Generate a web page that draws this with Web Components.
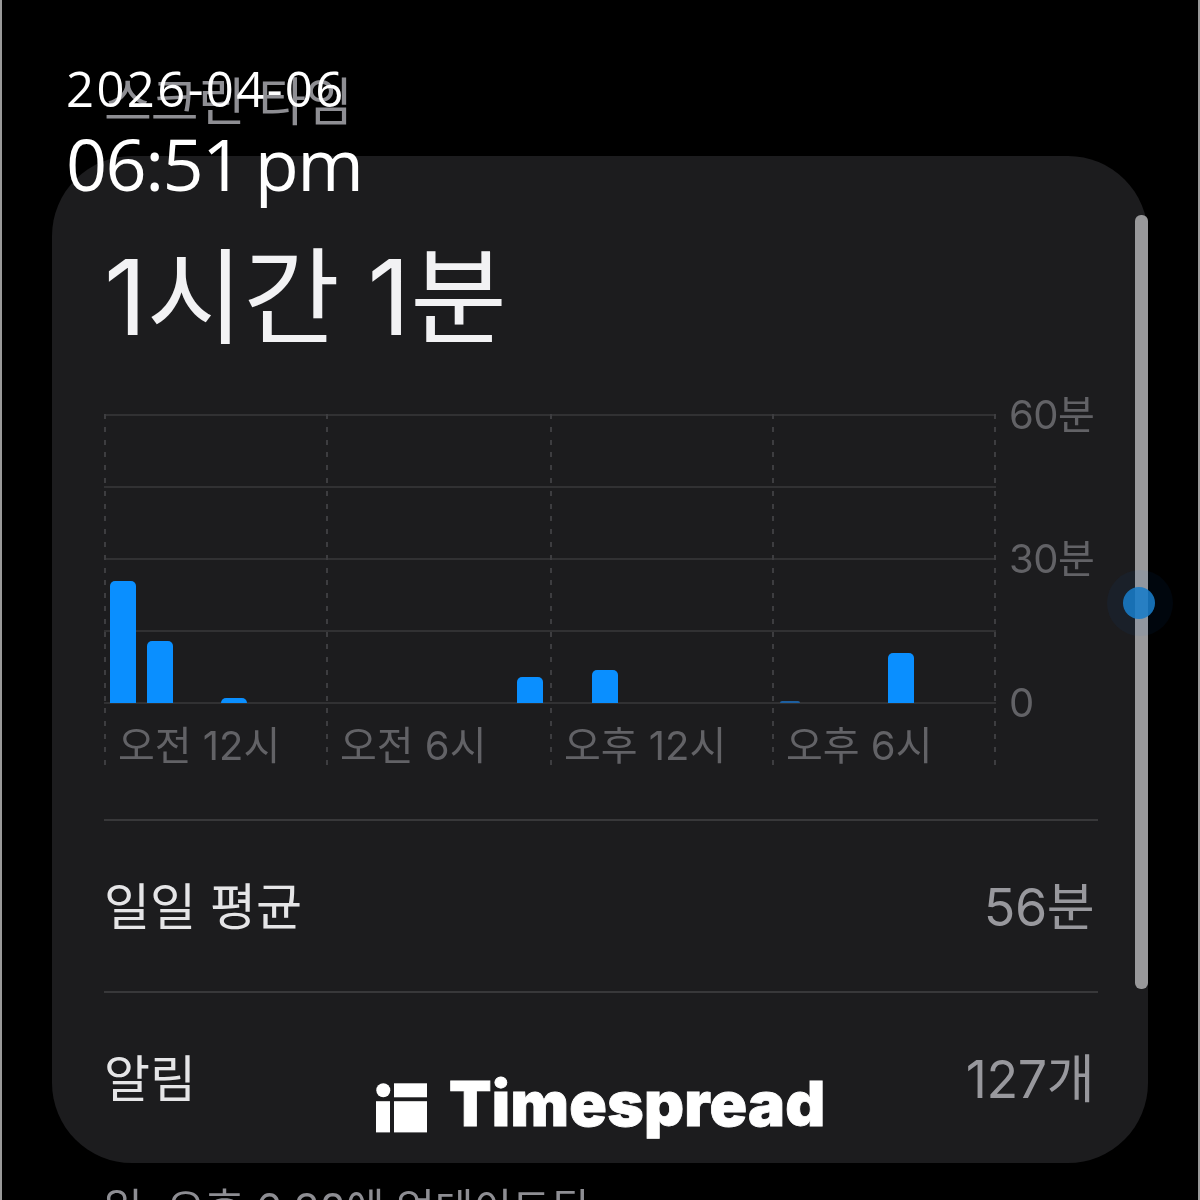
<!DOCTYPE html>
<html lang="ko">
<head>
<meta charset="utf-8">
<title>스크린 타임</title>
<style>
  html, body { margin: 0; padding: 0; background: #000; }
</style>
</head>
<body>
<screen-time-page>
  <stat-row slot="rows" label="일일 평균" value="56분"></stat-row>
  <stat-row slot="rows" label="알림" value="127개" last></stat-row>
</screen-time-page>

<script>
const KR_FONT = 'Inter, "Noto Sans CJK KR", "Noto Sans", sans-serif';

class ScreenTimePage extends HTMLElement {
  connectedCallback() {
    this.attachShadow({ mode: 'open' });
    this.shadowRoot.innerHTML = `
      <style>
        :host {
          display: block;
          position: relative;
          width: 1200px;
          height: 1200px;
          box-sizing: border-box;
          overflow: hidden;
          background: #000;
          border-left: 2px solid #9a9a9a;
          border-right: 2px solid #9a9a9a;
          font-family: ${KR_FONT};
        }
        .content {
          display: flex;
          flex-direction: column;
          padding: 0 50px;
          filter: blur(0.5px);
        }
        h1 {
          margin: 0;
          padding: 68px 0 0 52px;
          height: 156px;
          box-sizing: border-box;
          font-size: 52px;
          line-height: 70px;
          font-weight: 400;
          color: #8e8e93;
          letter-spacing: -1px;
        }
        .card {
          box-sizing: border-box;
          height: 1007px;
          background: #1c1c1e;
          border-radius: 80px;
          padding: 66px 52px 0 52px;
          overflow: hidden;
        }
        .total {
          font-size: 105px;
          line-height: 150px;
          color: #f2f2f4;
          font-weight: 400;
          word-spacing: -2px;
          margin-bottom: 42px;
        }
        .note {
          padding: 21px 0 0 52px;
          font-size: 42px;
          line-height: 50px;
          color: #8e8e93;
          white-space: nowrap;
        }
      </style>
      <div class="content">
        <h1>스크린 타임</h1>
        <div class="card">
          <div class="total">1시간 1분</div>
          <usage-chart></usage-chart>
          <slot name="rows"></slot>
        </div>
        <div class="note">일, 오후 6:38에 업데이트됨</div>
      </div>
      <scroll-indicator></scroll-indicator>
      <time-stamp></time-stamp>
      <brand-logo></brand-logo>
    `;
  }
}

class UsageChart extends HTMLElement {
  connectedCallback() {
    this.attachShadow({ mode: 'open' });

    // hour of the day -> bar height in px
    const usage = { 0: 122, 1: 62, 3: 5, 11: 26, 13: 33, 18: 2, 21: 50 };
    let bars = '';
    for (let hour = 0; hour < 24; hour++) {
      const h = usage[hour];
      bars += h
        ? `<div class="bar${h < 3 ? ' sliver' : ''}" style="height:${h}px"></div>`
        : '<div></div>';
    }

    this.shadowRoot.innerHTML = `
      <style>
        :host {
          display: block;
          position: relative;
          width: 996px;
          height: 351px;
          margin-bottom: 54px;
          font-family: ${KR_FONT};
        }
        .lines {
          width: 892px;
          display: flex;
          flex-direction: column;
        }
        .lines div {
          box-sizing: border-box;
          height: 72px;
          border-top: 2px solid #313133;
        }
        .lines div:last-child { height: 2px; }
        .dashes {
          position: absolute;
          left: 0;
          top: 0;
          width: 892px;
          height: 351px;
          display: grid;
          grid-template-columns: 222px 224px 222px 222px 2px;
        }
        .dashes i {
          background: repeating-linear-gradient(to bottom, #3d3d40 0 5px, transparent 5px 12.8px) left top / 2px 100% no-repeat;
        }
        .bars {
          position: absolute;
          left: 0;
          top: 0;
          width: 890px;
          height: 289px;
          display: grid;
          grid-template-columns: repeat(24, 1fr);
          align-items: end;
        }
        .bar {
          width: 26px;
          justify-self: center;
          background: #0a8fff;
          border-radius: 5px 5px 0 0;
        }
        .bar.sliver { width: 20px; background: #1d5fa0; }
        .hours {
          position: absolute;
          left: 0;
          top: 288px;
          width: 892px;
          height: 63px;
          display: grid;
          grid-template-columns: 222px 224px 222px 222px;
          align-items: center;
          font-size: 40px;
          line-height: 63px;
          color: #626266;
        }
        .hours span { padding: 12px 0 0 14px; white-space: nowrap; }
        .axis {
          position: absolute;
          left: 905px;
          top: -19px;
          height: 328px;
          display: flex;
          flex-direction: column;
          justify-content: space-between;
          font-size: 40px;
          line-height: 40px;
          letter-spacing: -0.5px;
          color: #626266;
        }
      </style>
      <div class="lines"><div></div><div></div><div></div><div></div><div></div></div>
      <div class="bars">${bars}</div>
      <div class="dashes"><i></i><i></i><i></i><i></i><i></i></div>
      <div class="hours">
        <span>오전 12시</span><span>오전 6시</span><span>오후 12시</span><span>오후 6시</span>
      </div>
      <div class="axis"><span>60분</span><span>30분</span><span>0</span></div>
    `;
  }
}

class StatRow extends HTMLElement {
  connectedCallback() {
    this.attachShadow({ mode: 'open' });
    this.shadowRoot.innerHTML = `
      <style>
        :host {
          display: flex;
          box-sizing: border-box;
          width: 994px;
          height: 172px;
          align-items: center;
          justify-content: space-between;
          padding: 0 4px 6px 0;
          border-top: 2px solid #38383a;
          font-family: ${KR_FONT};
          font-size: 50px;
        }
        .label { color: #e5e5e7; }
        .value { color: #98989d; font-size: 52px; letter-spacing: -0.5px; }
      </style>
      <span class="label">${this.getAttribute('label')}</span>
      <span class="value">${this.getAttribute('value')}</span>
    `;
  }
}

class ScrollIndicator extends HTMLElement {
  connectedCallback() {
    this.attachShadow({ mode: 'open' });
    this.shadowRoot.innerHTML = `
      <style>
        :host {
          position: absolute;
          left: 1133px;
          top: 215px;
          width: 13px;
          height: 774px;
          background: #98989a;
          border-radius: 6px;
          filter: blur(0.5px);
        }
        .halo {
          position: absolute;
          left: -28px;
          top: 355px;
          width: 66px;
          height: 66px;
          border-radius: 50%;
          background: rgba(0, 122, 255, 0.05);
        }
        .dot {
          position: absolute;
          left: -12px;
          top: 372px;
          width: 32px;
          height: 32px;
          border-radius: 50%;
          background: rgba(24, 124, 200, 0.88);
        }
      </style>
      <div class="halo"></div>
      <div class="dot"></div>
    `;
  }
}

class TimeStamp extends HTMLElement {
  connectedCallback() {
    this.attachShadow({ mode: 'open' });
    this.shadowRoot.innerHTML = `
      <style>
        :host {
          position: absolute;
          left: 64px;
          top: 55px;
          display: flex;
          flex-direction: column;
          color: #fff;
          font-family: "Open Sans", "Noto Sans", sans-serif;
          white-space: nowrap;
        }
        .date { font-size: 49px; line-height: 66px; letter-spacing: 2.4px; }
        .time { font-size: 72px; line-height: 85px; letter-spacing: -1.6px; word-spacing: -4px; }
      </style>
      <div class="date">2026-04-06</div>
      <div class="time">06:51 pm</div>
    `;
  }
}

class BrandLogo extends HTMLElement {
  connectedCallback() {
    this.attachShadow({ mode: 'open' });
    this.shadowRoot.innerHTML = `
      <style>
        :host {
          position: absolute;
          left: 374px;
          top: 1069px;
          display: flex;
          align-items: center;
          gap: 22px;
          color: #fff;
          font-family: Inter, "Liberation Sans", sans-serif;
          font-weight: 900;
          font-size: 62px;
          line-height: 70px;
          letter-spacing: 0.3px;
          -webkit-text-stroke: 0.8px #fff;
          white-space: nowrap;
        }
        svg { display: block; flex: none; }
        span { margin-bottom: 7px; }
      </style>
      <svg width="51" height="50" viewBox="0 0 51 50" fill="#fff">
        <circle cx="7.3" cy="7.3" r="7"/>
        <rect x="0" y="18.2" width="14" height="31.2"/>
        <rect x="18" y="0.3" width="33" height="14"/>
        <rect x="18" y="18.2" width="33" height="31.2"/>
      </svg>
      <span>Timespread</span>
    `;
  }
}

customElements.define('screen-time-page', ScreenTimePage);
customElements.define('usage-chart', UsageChart);
customElements.define('stat-row', StatRow);
customElements.define('scroll-indicator', ScrollIndicator);
customElements.define('time-stamp', TimeStamp);
customElements.define('brand-logo', BrandLogo);
</script>
</body>
</html>
